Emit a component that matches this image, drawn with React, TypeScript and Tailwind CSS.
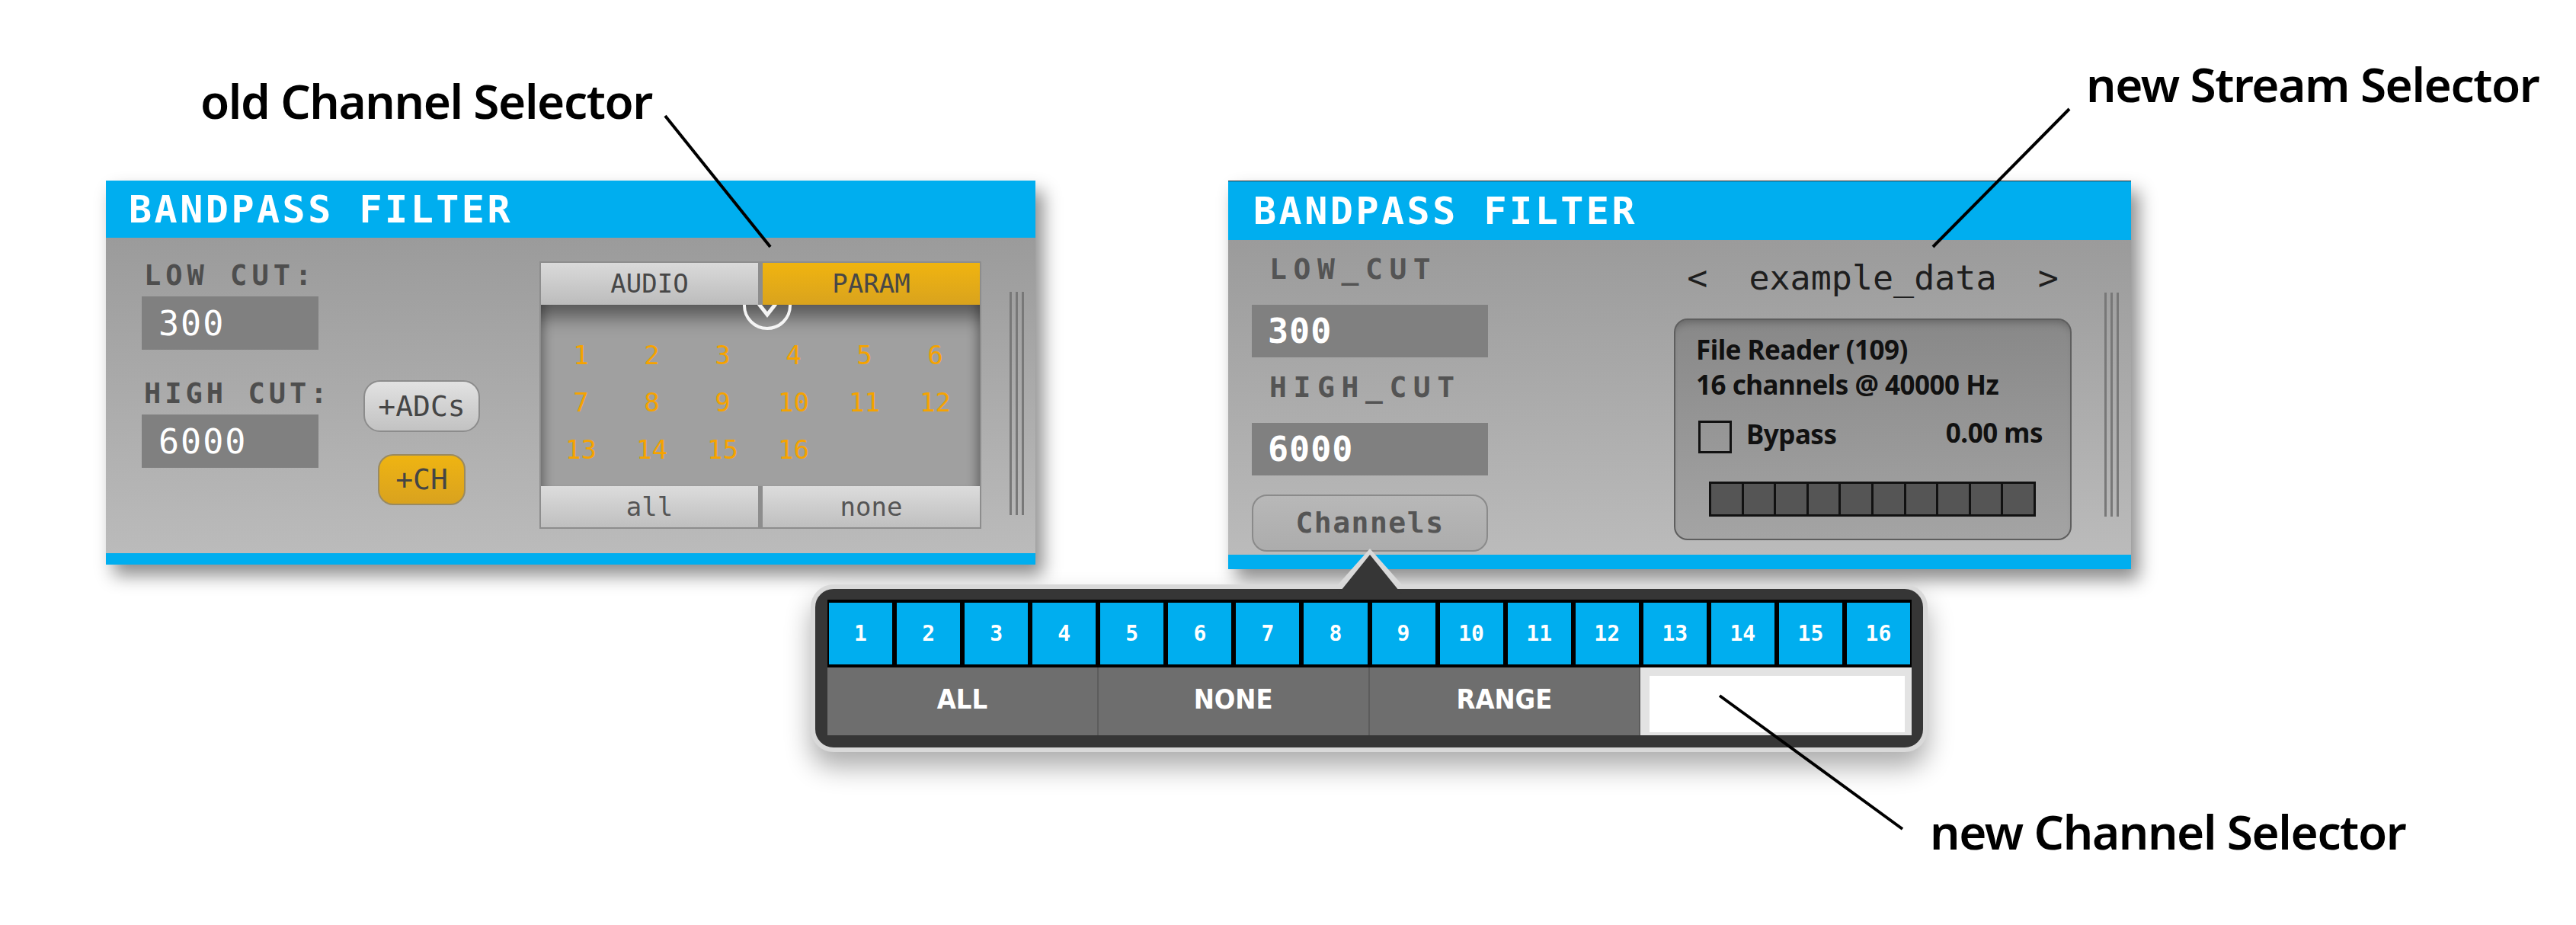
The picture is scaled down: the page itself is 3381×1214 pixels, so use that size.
import React from 'react';

const mono = "font-['DejaVu_Sans_Mono',monospace]";
const sans = "font-['Noto_Sans',sans-serif]";

// three thin vertical lines at the right edge of each panel
const Grip: React.FC<{ className?: string }> = ({ className = '' }) => (
  <div className={`flex gap-[5px] ${className}`}>
    <div className="w-[3px] h-full bg-[#787878]" />
    <div className="w-[3px] h-full bg-[#787878]" />
    <div className="w-[3px] h-full bg-[#787878]" />
  </div>
);

const OldChannelSelector: React.FC = () => {
  const channels = Array.from({ length: 16 }, (_, i) => i + 1);
  return (
    <div className="ml-[78px] mt-[31px] w-[580px] h-[351px] bg-[#8d8d8d] p-[2px] flex flex-col">
      <div className="h-[55px] grid grid-cols-2 gap-[6px]">
        <div className={`bg-linear-to-b from-[#dadada] to-[#bcbcbc] flex items-center justify-center ${mono} text-[34px] text-[#474747]`}>
          AUDIO
        </div>
        <div className={`bg-linear-to-b from-[#f0b40e] to-[#d9a31d] flex items-center justify-center ${mono} text-[34px] text-[#474747]`}>
          PARAM
        </div>
      </div>
      <div className="relative flex-1 overflow-hidden bg-[#a0a0a0] shadow-[inset_0_30px_24px_-14px_rgba(0,0,0,0.45),inset_16px_0_14px_-12px_rgba(0,0,0,0.3),inset_-16px_0_14px_-12px_rgba(0,0,0,0.3)]">
        <svg className="absolute left-[263px] top-[-33px]" width="68" height="68" viewBox="0 0 68 68" fill="none">
          <circle cx="34" cy="34" r="30" stroke="#f4f4f4" strokeWidth="4" />
          <path d="M23 32 L34 46 L45 32" stroke="#f4f4f4" strokeWidth="5" strokeLinejoin="miter" />
        </svg>
        <div className="grid grid-cols-[repeat(6,93px)] auto-rows-[62px] pl-[6px] pt-[35px]">
          {channels.map((c) => (
            <div key={c} className={`flex items-center justify-center ${mono} text-[34px] text-[#f5a300]`}>
              {c}
            </div>
          ))}
        </div>
      </div>
      <div className="h-[54px] grid grid-cols-2 gap-[6px]">
        <div className={`bg-linear-to-b from-[#dcdcdc] to-[#bfbfbf] flex items-center justify-center ${mono} text-[34px] text-[#555]`}>
          all
        </div>
        <div className={`bg-linear-to-b from-[#dcdcdc] to-[#bfbfbf] flex items-center justify-center ${mono} text-[34px] text-[#555]`}>
          none
        </div>
      </div>
    </div>
  );
};

const OldPanel: React.FC = () => (
  <div className="w-[1220px] h-[504px] flex flex-col shadow-[10px_14px_22px_rgba(0,0,0,0.45)]">
    <div className="h-[75px] shrink-0 bg-[#00aeef] flex items-center pl-[30px]">
      <span className={`${mono} font-bold text-[50px] leading-none tracking-[3.5px] text-white`}>BANDPASS FILTER</span>
    </div>
    <div className="flex-1 bg-linear-to-b from-[#9b9b9b] to-[#bbbbbb] flex items-start pl-[47px]">
      {/* cut inputs */}
      <div className="w-[232px] mt-[31px] flex flex-col">
        <span className={`${mono} font-bold text-[37px] leading-none tracking-[6px] text-[#4e4e4e] pl-[3px] whitespace-nowrap`}>LOW CUT:</span>
        <div className="mt-[9px] h-[70px] bg-[#808080] flex items-center pl-[22px]">
          <span className={`${mono} text-[45px] leading-none tracking-[2px] text-white`}>300</span>
        </div>
        <span className={`mt-[39px] ${mono} font-bold text-[37px] leading-none tracking-[5px] text-[#4e4e4e] pl-[3px] whitespace-nowrap`}>HIGH CUT:</span>
        <div className="mt-[9px] h-[70px] bg-[#808080] flex items-center pl-[22px]">
          <span className={`${mono} text-[45px] leading-none tracking-[2px] text-white`}>6000</span>
        </div>
      </div>
      {/* buttons */}
      <div className="ml-[59px] w-[153px] mt-[187px] flex flex-col items-center">
        <div className={`w-[153px] h-[68px] rounded-[22px] border-2 border-[#8c8c8c] bg-linear-to-b from-[#e2e2e2] to-[#c2c2c2] flex items-center justify-center ${mono} text-[38px] text-[#454545]`}>
          +ADCs
        </div>
        <div className={`mt-[29px] w-[115px] h-[67px] rounded-[20px] border-2 border-[#9a8a60] bg-linear-to-b from-[#efb411] to-[#d9a21e] flex items-center justify-center ${mono} text-[38px] text-[#454545]`}>
          +CH
        </div>
      </div>
      <OldChannelSelector />
      <Grip className="ml-[37px] mt-[71px] h-[293px]" />
    </div>
    <div className="h-[15px] shrink-0 bg-[#00aeef]" />
  </div>
);

const NewPanel: React.FC = () => (
  <div className="w-[1185px] h-[510px] flex flex-col border-t border-[#2e2e2e] shadow-[10px_14px_22px_rgba(0,0,0,0.45)]">
    <div className="h-[77px] shrink-0 bg-[#00aeef] flex items-center pl-[33px]">
      <span className={`${mono} font-bold text-[50px] leading-none tracking-[3.5px] text-white`}>BANDPASS FILTER</span>
    </div>
    <div className="flex-1 bg-linear-to-b from-[#9b9b9b] to-[#bbbbbb] flex items-start pl-[31px]">
      {/* cut inputs + channels button */}
      <div className="w-[310px] mt-[19px] flex flex-col">
        <span className={`${mono} font-bold text-[38px] leading-none tracking-[8.6px] text-[#545454] pl-[23px] whitespace-nowrap`}>LOW_CUT</span>
        <div className="mt-[28px] h-[69px] bg-[#808080] flex items-center pl-[21px]">
          <span className={`${mono} font-bold text-[45px] leading-none tracking-[1px] text-white`}>300</span>
        </div>
        <span className={`mt-[20px] ${mono} font-bold text-[38px] leading-none tracking-[8.6px] text-[#545454] pl-[23px] whitespace-nowrap`}>HIGH_CUT</span>
        <div className="mt-[28px] h-[69px] bg-[#808080] flex items-center pl-[21px]">
          <span className={`${mono} font-bold text-[45px] leading-none tracking-[1px] text-white`}>6000</span>
        </div>
        <div className={`mt-[25px] h-[75px] rounded-[20px] border-2 border-[#8a8a8a] bg-linear-to-b from-[#b8b8b8] to-[#acacac] flex items-center justify-center ${mono} font-bold text-[38px] tracking-[1.5px] text-[#555]`}>
          Channels
        </div>
      </div>
      {/* stream selector */}
      <div className="ml-[244px] w-[522px] mt-[27px] flex flex-col">
        <div className={`text-center whitespace-pre ${mono} text-[45px] leading-none text-[#1e1e1e]`}>{'<  example_data  >'}</div>
        <div className={`mt-[31px] h-[291px] rounded-[18px] border-2 border-[#5e5e5e] bg-linear-to-b from-[#888888] to-[#a4a4a4] shadow-[inset_0_10px_12px_-8px_rgba(0,0,0,0.3)] pl-[27px] pr-[36px] pt-[16px] flex flex-col ${sans} font-bold text-[35px] tracking-[-0.5px] text-[#111]`}>
          <div className="leading-[46px]">File Reader (109)</div>
          <div className="leading-[46px]">16 channels @ 40000 Hz</div>
          <div className="mt-[24px] flex items-start">
            <div className="ml-[3px] w-[44px] h-[43px] border-[3px] border-[#111]" />
            <span className="ml-[19px] leading-none">Bypass</span>
            <span className="ml-auto -mt-[2px] leading-none">0.00 ms</span>
          </div>
          <div className="mt-[37px] ml-[17px] w-[429px] h-[46px] bg-[#111] p-[3px] grid grid-cols-10 gap-[3px]">
            {Array.from({ length: 10 }, (_, i) => (
              <div key={i} className="bg-[#555]" />
            ))}
          </div>
        </div>
      </div>
      <Grip className="ml-[43px] mt-[69px] h-[294px]" />
    </div>
    <div className="h-[19px] shrink-0 bg-[#00aeef]" />
  </div>
);

const NewChannelSelector: React.FC = () => {
  const channels = Array.from({ length: 16 }, (_, i) => i + 1);
  return (
    <div className="relative ml-[925px] mt-[20px] w-[1466px] h-[220px] rounded-[30px] border-[6px] border-[#d9d9d9] bg-[#363636] pl-[16px] pt-[14px] shadow-[0_20px_34px_rgba(0,0,0,0.32)]">
      {/* pointer to the Channels button */}
      <svg className="absolute left-[678px] top-[-53px]" width="100" height="60" viewBox="0 0 100 60">
        <polygon points="50,0 97,53 3,53" fill="#d9d9d9" />
        <polygon points="50,8 92,60 8,60" fill="#363636" />
      </svg>
      <div className="w-[1423px] h-[89px] bg-black px-[2px] py-[4px] grid grid-cols-16 gap-[6px]">
        {channels.map((c) => (
          <div key={c} className={`bg-[#00aeef] flex items-center justify-center ${mono} font-bold text-[28px] text-white`}>
            {c}
          </div>
        ))}
      </div>
      <div className="w-[1423px] h-[89px] grid grid-cols-4">
        {['ALL', 'NONE', 'RANGE'].map((b) => (
          <div
            key={b}
            className="bg-[#6e6e6e] border-r-2 border-[#5c5c5c] flex items-center justify-center pb-[6px] font-['DejaVu_Sans_Condensed','DejaVu_Sans',sans-serif] font-stretch-condensed font-bold text-[36px] text-white"
          >
            {b}
          </div>
        ))}
        <div className="bg-white border-t-[11px] border-l-[12px] border-r-[9px] border-b-[4px] border-[#e3e3e3]" />
      </div>
    </div>
  );
};

export default function App() {
  return (
    <div className="relative w-[3381px] h-[1214px] bg-white overflow-hidden">
      <div className="pt-[237px] pl-[139px]">
        <div className="flex items-start gap-[253px]">
          <OldPanel />
          <NewPanel />
        </div>
        <NewChannelSelector />
      </div>

      {/* annotation callouts */}
      <svg className="absolute left-0 top-0 pointer-events-none" width="3381" height="1214" viewBox="0 0 3381 1214">
        <line x1="873" y1="152" x2="1011" y2="324" stroke="#000" strokeWidth="4" />
        <line x1="2716" y1="143" x2="2537" y2="324" stroke="#000" strokeWidth="4" />
        <line x1="2257" y1="913" x2="2497" y2="1088" stroke="#000" strokeWidth="4" />
      </svg>
      <div className={`absolute left-[263px] top-[101px] ${sans} font-semibold text-[62px] leading-none tracking-[-1.4px] text-black whitespace-nowrap`}>
        old Channel Selector
      </div>
      <div className={`absolute left-[2738px] top-[79px] ${sans} font-semibold text-[62px] leading-none tracking-[-1.4px] text-black whitespace-nowrap`}>
        new Stream Selector
      </div>
      <div className={`absolute left-[2533px] top-[1060px] ${sans} font-semibold text-[62px] leading-none tracking-[-1.4px] text-black whitespace-nowrap`}>
        new Channel Selector
      </div>
    </div>
  );
}
